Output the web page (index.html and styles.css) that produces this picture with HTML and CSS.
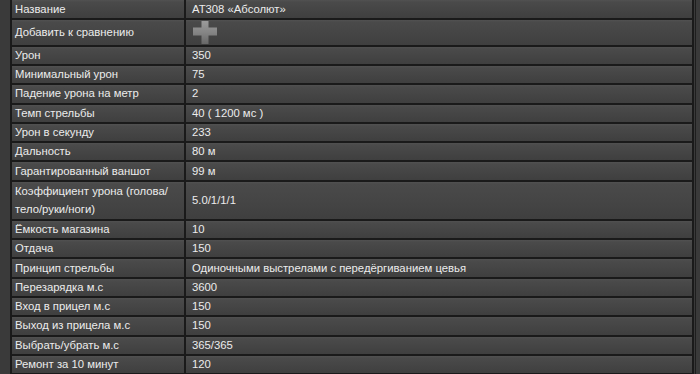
FILE: index.html
```html
<!DOCTYPE html>
<html lang="ru">
<head>
<meta charset="utf-8">
<title>АТ308 «Абсолют»</title>
<link rel="stylesheet" href="styles.css">
</head>
<body>
<div class="frame">
<table class="stats">
<colgroup><col class="c-key"><col class="c-val"></colgroup>
<tbody>
<tr class="first"><td class="k">Название</td><td class="v">АТ308 «Абсолют»</td></tr>
<tr class="add"><td class="k">Добавить к сравнению</td><td class="v"><svg class="plus" width="24" height="23" viewBox="0 0 24 23"><defs><linearGradient id="pg" x1="0" y1="0" x2="0" y2="1"><stop offset="0" stop-color="#9b9b9b"/><stop offset="0.5" stop-color="#858585"/><stop offset="1" stop-color="#686868"/></linearGradient></defs><path d="M8.5 0h7v6.5h8.5v8h-8.5v8.5h-7v-8.5h-8.5v-8h8.5z" fill="url(#pg)"/></svg></td></tr>
<tr><td class="k">Урон</td><td class="v">350</td></tr>
<tr><td class="k">Минимальный урон</td><td class="v">75</td></tr>
<tr><td class="k">Падение урона на метр</td><td class="v">2</td></tr>
<tr><td class="k">Темп стрельбы</td><td class="v">40 ( 1200 мс )</td></tr>
<tr><td class="k">Урон в секунду</td><td class="v">233</td></tr>
<tr><td class="k">Дальность</td><td class="v">80 м</td></tr>
<tr><td class="k">Гарантированный ваншот</td><td class="v">99 м</td></tr>
<tr class="double"><td class="k">Коэффициент урона (голова/<br>тело/руки/ноги)</td><td class="v">5.0/1/1/1</td></tr>
<tr><td class="k">Ёмкость магазина</td><td class="v">10</td></tr>
<tr><td class="k">Отдача</td><td class="v">150</td></tr>
<tr><td class="k">Принцип стрельбы</td><td class="v">Одиночными выстрелами с передёргиванием цевья</td></tr>
<tr><td class="k">Перезарядка м.с</td><td class="v">3600</td></tr>
<tr><td class="k">Вход в прицел м.с</td><td class="v">150</td></tr>
<tr><td class="k">Выход из прицела м.с</td><td class="v">150</td></tr>
<tr><td class="k">Выбрать/убрать м.с</td><td class="v">365/365</td></tr>
<tr><td class="k">Ремонт за 10 минут</td><td class="v">120</td></tr>
</tbody>
</table>
</div>
</body>
</html>
```
FILE: styles.css
```css
html, body {
  margin: 0;
  padding: 0;
  height: 100%;
  overflow: hidden;
  background: #3a3a3a;
}

.frame {
  width: 684px;
  padding-left: 10px;
  padding-right: 1px;
  border-right: 1px solid #1e1e1e;
  height: 100%;
  overflow: hidden;
}

.stats {
  width: 684px;
  margin-top: -2px;
  table-layout: fixed;
  border-collapse: separate;
  border-spacing: 2px;
  background: #1a1a1a;
  font-family: "Liberation Sans", Arial, sans-serif;
  font-size: 11.3px;
  color: #ececec;
}

.c-key { width: 172px; }
.c-val { width: 506px; }

.stats td {
  height: 17.3px;
  padding: 0 4px 0 3px;
  line-height: 17px;
  white-space: nowrap;
  vertical-align: middle;
  background: linear-gradient(#515151 0, #4a4a4a 2px, #444444 60%, #3f3f3f 100%);
}

.stats td.v {
  padding-left: 6px;
}

.stats tr.first td {
  height: 18.2px;
}

.stats tr.add td {
  height: 24.5px;
}

.stats tr.double td {
  height: 37px;
  line-height: 18px;
}

.plus {
  display: block;
  margin-left: 1px;
}
```
